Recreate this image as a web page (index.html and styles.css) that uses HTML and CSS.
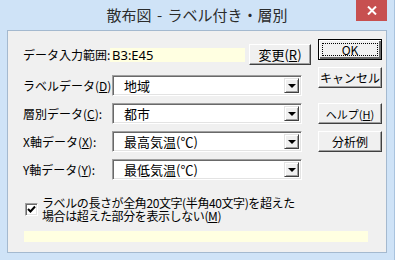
FILE: index.html
```html
<!DOCTYPE html>
<html lang="ja">
  <head>
    <meta charset="UTF-8" />
    <title>散布図 - ラベル付き・層別</title>
    <link rel="stylesheet" href="styles.css">
  </head>
  <body>
    <div class="window">
      <div class="titlebar">
        <span></span>
        <div class="title">散布図 - ラベル付き・層別</div>
        <div class="close">
          <svg width="10" height="9" viewBox="0 0 10 9">
            <path d="M1 0.5 L9 8.5 M9 0.5 L1 8.5" stroke="#fff" stroke-width="2" />
          </svg>
        </div>
      </div>
      <div class="client">
        <div class="main">
          <div class="fields">
            <div class="range-row">
              <span class="label range-label">データ入力範囲:</span>
              <span class="range">B3:E45</span>
              <div class="btn btn-change">変更(<u>R</u>)</div>
            </div>
            <div class="field-row">
              <span class="label">ラベルデータ(<u>D</u>):</span>
              <div class="combo"><span class="value">地域</span><span class="drop"></span></div>
            </div>
            <div class="field-row">
              <span class="label">層別データ(<u>C</u>):</span>
              <div class="combo"><span class="value">都市</span><span class="drop"></span></div>
            </div>
            <div class="field-row">
              <span class="label">X軸データ(<u>X</u>):</span>
              <div class="combo"><span class="value">最高気温(℃)</span><span class="drop"></span></div>
            </div>
            <div class="field-row">
              <span class="label">Y軸データ(<u>Y</u>):</span>
              <div class="combo"><span class="value">最低気温(℃)</span><span class="drop"></span></div>
            </div>
          </div>
          <div class="buttons">
            <div class="btn btn-default"><span class="focus">OK</span></div>
            <div class="btn">キャンセル</div>
            <div class="btn btn-help">ヘルプ(<u>H</u>)</div>
            <div class="btn">分析例</div>
          </div>
        </div>
        <div class="option">
          <span class="check">
            <svg width="9" height="9" viewBox="0 0 9 9">
              <path d="M1 4 L3.5 6.5 L8 1.5" stroke="#000" stroke-width="2" fill="none" />
            </svg>
          </span>
          <div class="option-text">
            <div class="line">ラベルの長さが全角20文字(半角40文字)を超えた</div>
            <div class="line">場合は超えた部分を表示しない<span class="key">(<u>M</u>)</span></div>
          </div>
        </div>
        <div class="note"></div>
      </div>
    </div>
  </body>
</html>
```

FILE: styles.css
```css
* {
  box-sizing: border-box;
  --frame: #cfe3f7;
  --face: #f0f0f0;
  --tip: #ffffe1;
}
body {
  margin: 0;
  font-family: "Noto Sans CJK JP", "Noto Sans", sans-serif;
  font-size: 12px;
  color: #000;
}
.window {
  width: 395px;
  height: 260px;
  background-color: var(--frame);
  border-right: 1px solid #a9c3de;
}
.titlebar {
  height: 30px;
  display: grid;
  grid-template-columns: 38px 1fr 38px;
  align-items: start;
}
.title {
  text-align: center;
  font-size: 15px;
  line-height: 20px;
  padding-top: 5px;
  color: #2b2b2b;
  word-spacing: 2px;
}
.close {
  width: 31px;
  height: 21px;
  background-color: #c75050;
  display: flex;
  align-items: center;
  justify-content: center;
}
.client {
  margin: 0 7px;
  height: 223px;
  background-color: var(--face);
  border: 1px solid #a4b9cf;
  padding: 0 4px 0 15px;
}
.main {
  display: flex;
  justify-content: space-between;
}
.fields {
  margin-top: 13px;
  display: flex;
  flex-direction: column;
  gap: 7px;
}
.range-row {
  display: flex;
  align-items: center;
  height: 21px;
  margin-bottom: 3px;
}
.label {
  width: 89px;
  line-height: 14px;
  white-space: nowrap;
}
.range-label {
  width: 87px;
}
.range {
  width: 135px;
  height: 14px;
  background-color: var(--tip);
  font-family: "Noto Sans", sans-serif;
  font-size: 13px;
  line-height: 14px;
  padding-left: 2px;
  margin-right: 4px;
}
.field-row {
  display: flex;
  align-items: center;
  height: 21px;
}
.combo {
  width: 190px;
  height: 21px;
  background-color: #fff;
  border: 1px solid;
  border-color: #a0a0a0 #fff #fff #a0a0a0;
  box-shadow: inset 1px 1px #696969, inset -1px -1px #e3e3e3;
  display: flex;
  align-items: center;
  justify-content: space-between;
  padding: 2px;
}
.value {
  font-size: 13px;
  line-height: 15px;
  padding-left: 9px;
}
.drop {
  width: 15px;
  height: 15px;
  background-color: var(--face);
  border: 1px solid;
  border-color: #e3e3e3 #404040 #404040 #e3e3e3;
  box-shadow: inset 1px 1px #fff, inset -1px -1px #a0a0a0;
  display: flex;
  align-items: center;
  justify-content: center;
}
.drop::after {
  content: "";
  border-left: 4px solid transparent;
  border-right: 4px solid transparent;
  border-top: 4px solid #000;
  margin-top: 1px;
}
.buttons {
  margin-top: 8px;
  width: 64px;
  display: flex;
  flex-direction: column;
  gap: 7px;
}
.btn {
  height: 21px;
  background-color: var(--face);
  border: 1px solid;
  border-color: #fff #404040 #404040 #fff;
  box-shadow: inset -1px -1px #a0a0a0;
  display: flex;
  align-items: center;
  justify-content: center;
  line-height: 14px;
  white-space: nowrap;
}
.btn-change {
  width: 62px;
  font-size: 13px;
}
.btn-help {
  margin-top: 8px;
  font-size: 11px;
}
.btn-default {
  border: 1px solid #000;
  box-shadow: inset 1px 1px #fff, inset -2px -2px #696969;
  padding: 3px;
}
.focus {
  width: 100%;
  height: 100%;
  border: 1px dotted #000;
  display: flex;
  align-items: center;
  justify-content: center;
}
.option {
  display: flex;
  align-items: center;
  margin-top: 16px;
  padding-left: 2px;
}
.check {
  width: 13px;
  height: 13px;
  background-color: #fff;
  border: 1px solid;
  border-color: #a0a0a0 #fff #fff #a0a0a0;
  box-shadow: inset 1px 1px #696969, inset -1px -1px #e3e3e3;
  display: flex;
  align-items: center;
  justify-content: center;
  margin-right: 4px;
}
.option-text {
  font-size: 12px;
  letter-spacing: -0.4px;
}
.line {
  height: 13px;
  line-height: 13px;
  white-space: nowrap;
}
.key {
  display: inline-block;
  height: 13px;
}
.note {
  margin-top: 9px;
  margin-left: 1px;
  width: 344px;
  height: 11px;
  background-color: var(--tip);
}
```
